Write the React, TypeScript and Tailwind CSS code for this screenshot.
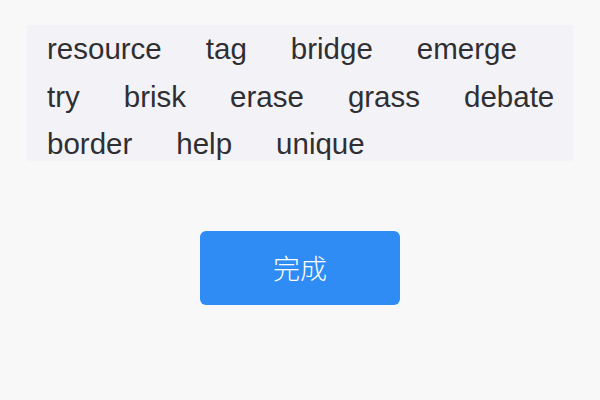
export default function App() {
  const words = ["resource", "tag", "bridge", "emerge", "try", "brisk", "erase", "grass", "debate", "border", "help", "unique"];
  return (
    <div className="w-[600px] h-[400px] bg-[#f8f8f9] pt-[25px] pl-[27px]" style={{ fontFamily: '"Liberation Sans", "Noto Sans CJK SC", sans-serif' }}>
      <div className="w-[546px] h-[136px] bg-[#f3f3f7] rounded-[3px] pl-[20px] pr-[8px] pt-[6px] flex flex-wrap content-start gap-x-[44px] gap-y-[11.5px]">
        {words.map((w) => (
          <span key={w} className="text-[29.5px] leading-[36px] text-[#2f2f33]">{w}</span>
        ))}
      </div>
      <div className="mt-[70px] ml-[173px] w-[200px] h-[74px] rounded-[6px] bg-[#2e8cf4] flex items-center justify-center">
        <span className="text-white text-[27px] font-light" style={{ fontFamily: '"Noto Sans CJK SC", sans-serif' }}>完成</span>
      </div>
    </div>
  );
}
